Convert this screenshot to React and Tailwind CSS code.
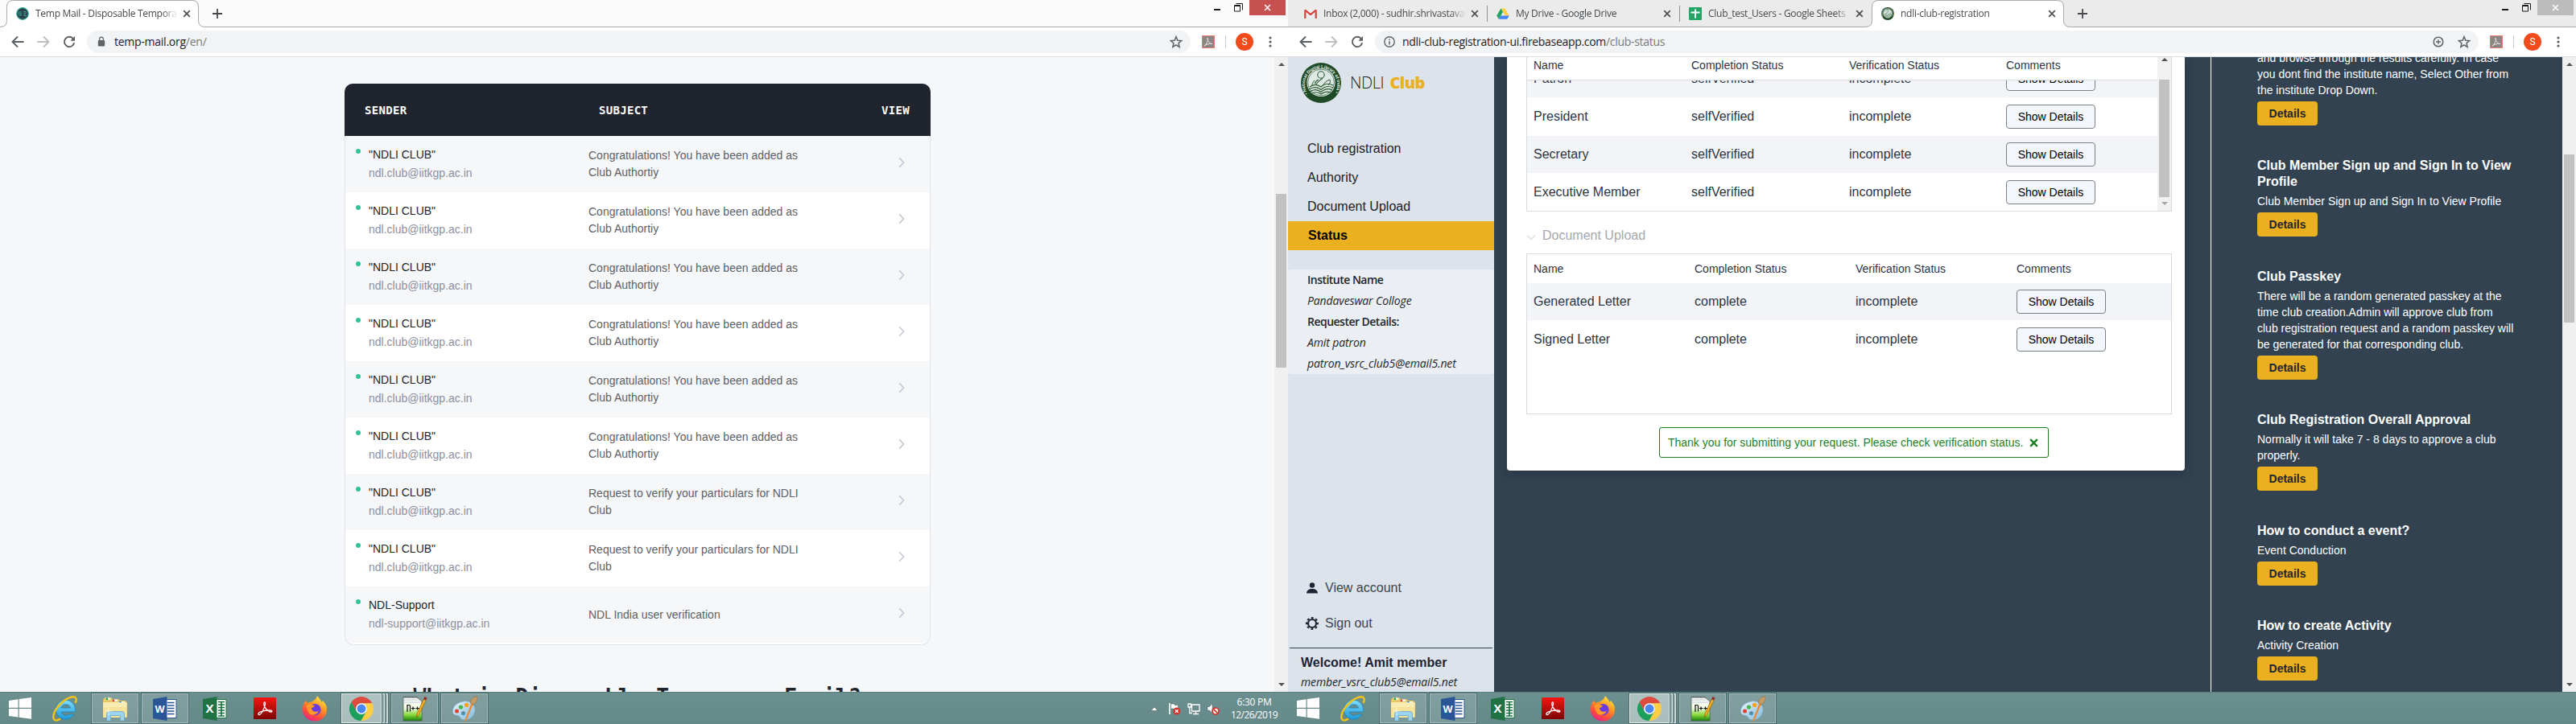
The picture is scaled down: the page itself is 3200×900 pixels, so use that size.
import React from 'react';

const ARIAL = "font-['Liberation_Sans',sans-serif]";
const UI = "font-['Open_Sans',sans-serif]";

/* ---------- small icons ---------- */

function NdliSeal({ id, className }) {
  return (
    <svg viewBox="0 0 50 50" className={className}>
      <circle cx="25" cy="25" r="25" fill="#1f4a26" />
      <circle cx="25" cy="24.5" r="17.6" fill="#dfe9e4" />
      <circle cx="25" cy="24.5" r="16.4" fill="none" stroke="#4a6e50" strokeWidth="0.8" />
      <defs>
        <path id={id} d="M8.6 38.5 A20.2 20.2 0 1 1 41.6 38.5" />
      </defs>
      <text fontSize="5.4" fontWeight="bold" fill="#e4efe4" fontFamily="Liberation Sans, sans-serif">
        <textPath href={'#' + id} textLength="86">• National Digital Library of India •</textPath>
      </text>
      <circle cx="25" cy="15" r="4.2" fill="none" stroke="#2a5a34" strokeWidth="1.1" />
      <path d="M27 19 C24 22 21 23 19 27 M22 21 C19 22 18 24 17.5 26" fill="none" stroke="#2a5a34" strokeWidth="1.1" />
      <path
        d="M11 30 C16 26 21 27 25 30 C29 26 34 25 40 28 M10 33 C16 29.500 21 30 25 33.500 C30 29 35 28.500 40 31 M11 36 C16 32.500 21 33 25 36.500 C30 32 35 32 39 34 M14 38 C18 36 21 36 25 39 C29 36 33 35.500 37 37"
        fill="none" stroke="#2a5a34" strokeWidth="1.2"
      />
      <path d="M27 29 C29 25 32 22 36 21 C37 24 36 26 34 28 M14 28 C14 26 16 23 17 22" fill="none" stroke="#2a5a34" strokeWidth="1" />
    </svg>
  );
}

function TempMailIcon() {
  return (
    <svg viewBox="0 0 16 16" className="size-4">
      <circle cx="8" cy="8" r="7.300" fill="#2b3f4e" stroke="#35b093" strokeWidth="1.2" />
      <path d="M2.500 6H7M2 8H7M3 10H7M9 5.500H12V8H10V10.500H13" stroke="#35b093" strokeWidth="0.9" fill="none" />
    </svg>
  );
}

function GmailIcon() {
  return (
    <svg viewBox="0 0 16 16" className="size-4">
      <path d="M2 3H14V14H2Z" fill="#eceff1" />
      <path d="M1.300 14V3.500L8 9.200L14.700 3.500V14" fill="none" stroke="#d5443a" strokeWidth="2.200" strokeLinejoin="bevel" />
    </svg>
  );
}

function DriveIcon() {
  return (
    <svg viewBox="0 0 16 16" className="size-4">
      <path d="M5.500 1.500H10.500L15.800 10.500H10.800Z" fill="#ffcf48" />
      <path d="M5.500 1.500L0.200 10.500L2.800 14.700L8 5.800Z" fill="#1fa463" />
      <path d="M5.200 10.500H15.800L13.200 14.700H2.800Z" fill="#4285f4" />
    </svg>
  );
}

function SheetsIcon() {
  return (
    <svg viewBox="0 0 16 16" className="size-4">
      <rect width="16" height="16" rx="1.200" fill="#23a566" />
      <path d="M8 2.500V13.500M2.500 6.500H13.500" stroke="#fff" strokeWidth="2" />
    </svg>
  );
}

function Cross({ className }) {
  return (
    <svg viewBox="0 0 10 10" className={className}>
      <path d="M1.200 1.200L8.800 8.800M8.800 1.200L1.200 8.800" stroke="currentColor" strokeWidth="1.700" />
    </svg>
  );
}

/* ---------- browser chrome ---------- */

function Tab({ icon, title, active, divider }) {
  return (
    <div className={'relative flex h-[34px] w-[239px] shrink-0 items-center pl-3 ' + (active ? '' : 'border-b border-[#a9a9a9]')}>
      {active && (
        <svg viewBox="0 0 255 34" className="absolute -left-2 top-0 h-[34px] w-[255px]">
          <path d="M0 34V33.500Q8.500 33.500 8.500 25.500V8.500Q8.500 .5 16.500 .5H238.500Q246.500 .5 246.500 8.500V25.500Q246.500 33.500 255 33.500V34Z" fill="#fff" />
          <path d="M0 33.500Q8.500 33.500 8.500 25.500V8.500Q8.500 .5 16.500 .5H238.500Q246.500 .5 246.500 8.500V25.500Q246.500 33.500 255 33.500" fill="none" stroke="#a9a9a9" />
        </svg>
      )}
      <div className="relative flex w-full items-center">
        {icon}
        <div className="ml-2 w-[177px] overflow-hidden whitespace-nowrap text-xs leading-4 tracking-[-0.27px] text-[#45494d] [mask-image:linear-gradient(to_right,#000_158px,transparent_177px)]">
          {title}
        </div>
        <Cross className="ml-[6px] size-[10px] text-[#4b4f53]" />
      </div>
      {divider && <div className="absolute -right-px top-[7px] h-5 w-px bg-[#8f8f8f]" />}
    </div>
  );
}

function TabStrip({ tabs, focused }) {
  return (
    <div className={'flex h-[34px] ' + (focused ? 'bg-[#fbfbfb]' : 'bg-[#ebebeb]')}>
      <div className="w-2 border-b border-[#a9a9a9]" />
      {tabs}
      <div className="flex flex-1 items-start justify-end border-b border-[#a9a9a9]">
        <svg viewBox="0 0 12 12" className="ml-[17px] mr-auto mt-[11px] size-3">
          <path d="M6 0V12M0 6H12" stroke="#45494d" strokeWidth="1.800" />
        </svg>
        <div className="mt-[11px] h-[2px] w-2 bg-[#1b1b1b]" />
        <svg viewBox="0 0 11 11" className="ml-[17px] mt-1 size-[11px]">
          <path d="M2.500 .5H10.500V8.500" fill="none" stroke="#1b1b1b" />
          <path d="M.5 2.500H7.500V10H.5ZM.5 3.500H7.500" fill="none" stroke="#1b1b1b" />
        </svg>
        <div className={'ml-[8px] mr-[3px] flex h-[19px] w-[45px] items-center justify-center text-white ' + (focused ? 'bg-[#c75050]' : 'bg-[#bcbcbc]')}>
          <Cross className="size-[9px]" />
        </div>
      </div>
    </div>
  );
}

function Toolbar({ secure, host, path, zoomed }) {
  return (
    <div className="flex h-[37px] items-center border-b border-[#d9dadc] bg-white pb-px pl-[14px] text-[#5a5d61]">
      <svg viewBox="0 0 16 16" className="size-4"><path d="M15.500 8H1.500M8 1.500L1.500 8L8 14.500" fill="none" stroke="currentColor" strokeWidth="1.900" /></svg>
      <svg viewBox="0 0 16 16" className="ml-4 size-4 text-[#bcbec0]"><path d="M.5 8H14.500M8 1.500L14.500 8L8 14.500" fill="none" stroke="currentColor" strokeWidth="1.900" /></svg>
      <svg viewBox="0 0 16 16" className="ml-4 size-4">
        <path d="M13 4.100A6.200 6.200 0 1 0 14.200 9.200" fill="none" stroke="currentColor" strokeWidth="1.900" />
        <path d="M15 1V6.700H9.300Z" fill="currentColor" />
      </svg>
      <div className="ml-[14px] flex h-7 w-[1371px] items-center rounded-full bg-[#f1f3f4] pl-[11px] pr-[10px]">
        {secure ? (
          <svg viewBox="0 0 14 14" className="size-[14px]">
            <rect x="2.800" y="5" width="8.400" height="7.500" rx="1" fill="#5f6368" />
            <path d="M4.700 5.500V3.500A2.300 2.300 0 0 1 9.300 3.500V5.500" fill="none" stroke="#5f6368" strokeWidth="1.200" />
          </svg>
        ) : (
          <svg viewBox="0 0 14 14" className="size-[14px]">
            <circle cx="7" cy="7" r="6.200" fill="none" stroke="#5f6368" strokeWidth="1.400" />
            <path d="M7 6.200V10.500M7 3.400V5" stroke="#5f6368" strokeWidth="1.500" />
          </svg>
        )}
        <div className={'mt-px flex-1 text-sm leading-5 text-[#202124] ' + (secure ? 'ml-[9px] tracking-[-0.255px]' : 'ml-[9px] tracking-[-0.31px]')}>
          {host}<span className="text-[#777a7e]">{path}</span>
        </div>
        {zoomed && (
          <svg viewBox="0 0 14 14" className="mr-[17px] size-[14px]">
            <circle cx="7" cy="7" r="5.800" fill="none" stroke="#5f6368" strokeWidth="1.500" />
            <path d="M7 4V10M4 7H10" stroke="#5f6368" strokeWidth="1.300" />
          </svg>
        )}
        <svg viewBox="0 0 24 24" className="size-4">
          <path d="M12 2.500L14.800 9.300L22 9.900L16.500 14.600L18.200 21.700L12 17.900L5.800 21.700L7.500 14.600L2 9.900L9.200 9.300Z" fill="none" stroke="#5f6368" strokeWidth="2.300" />
        </svg>
      </div>
      <svg viewBox="0 0 16 16" className="ml-[14px] size-4">
        <rect x=".5" y=".5" width="15" height="15" fill="#8b8484" stroke="#ea7a74" />
        <path d="M3 13C6 11 8.300 6 7.300 3.200C6.300 6 9.500 10.500 13 10.500C9.500 9.800 6 11 3 13Z" fill="none" stroke="#e9e6e6" />
      </svg>
      <div className="ml-[13px] h-4 w-px bg-[#cfd1d3]" />
      <div className="ml-[12px] flex size-[22px] items-center justify-center rounded-full bg-[#f04a1d] font-['Roboto',sans-serif] text-xs text-white">S</div>
      <svg viewBox="0 0 4 14" className="ml-[19px] h-[14px] w-1"><g fill="#5a5d61"><circle cx="2" cy="2" r="1.600" /><circle cx="2" cy="7" r="1.600" /><circle cx="2" cy="12" r="1.600" /></g></svg>
    </div>
  );
}

function Arrow({ down, className }) {
  return (
    <svg viewBox="0 0 8 4" className={'h-1 w-2 ' + className}>
      <path d={down ? 'M0 0H8L4 4Z' : 'M0 4H8L4 0Z'} fill="currentColor" />
    </svg>
  );
}

function PageScrollbar({ thumb }) {
  return (
    <div className="flex w-[17px] flex-col items-center bg-[#f0f0f0] text-[#505050]">
      <Arrow className="mt-[7px]" />
      <div className={'w-[13px] bg-[#c1c1c1] ' + thumb} />
      <Arrow down className="mb-[7px] mt-auto" />
    </div>
  );
}

/* ---------- taskbar ---------- */

function StartIcon() {
  return (
    <svg viewBox="0 0 28 27" className="h-[27px] w-7">
      <path d="M0 4L11.500 2.300V12.700H0ZM12.700 2.100L28 0V12.700H12.700ZM0 14H11.500V24.500L0 22.900ZM12.700 14H28V26.700L12.700 24.700Z" fill="#fff" />
    </svg>
  );
}

function ExplorerEdgeIcon() {
  return (
    <svg viewBox="0 0 32 32" className="size-8">
      <defs>
        <linearGradient id="ieBlue" x1="0" y1="0" x2="0" y2="1"><stop offset="0" stopColor="#7fdcfb" /><stop offset="1" stopColor="#1c9ad9" /></linearGradient>
      </defs>
      <path d="M28.500 17.500A12 12 0 1 0 27 23H20.500A6 6 0 0 1 11 20H28.500ZM11 15A6 6 0 0 1 22.500 15Z" fill="url(#ieBlue)" stroke="#1683bd" strokeWidth=".7" />
      <path d="M10 28.500C5 32 .5 31 1.500 24.500C3 15 15 3.500 24 1.500C29.500 .5 31 4 28.500 9" fill="none" stroke="#f3c317" strokeWidth="2.400" />
    </svg>
  );
}

function FoldersIcon() {
  return (
    <svg viewBox="0 0 32 32" className="size-8">
      <path d="M1 5L3 2H11L13 4H20L22 6H29L31 9V26H1Z" fill="#e9c867" />
      <path d="M4 2.500H10V5H4Z" fill="#f4f4ee" /><path d="M4.500 2.500H7V5H4.500Z" fill="#23a455" />
      <path d="M12 4.500H19V7H12Z" fill="#f4f4ee" /><path d="M12.500 4.500H15V7H12.500Z" fill="#d9452c" />
      <path d="M20 7H28V9H20Z" fill="#f4f4ee" /><path d="M20.500 7H24V9H20.500Z" fill="#2b8be0" />
      <path d="M1 8H30.500V27H1Z" fill="#f6e39b" />
      <path d="M1 8H30.500V14H1Z" fill="#f9ebb2" />
      <path d="M5.500 31V22.500Q5.500 19.500 8.500 19.500H24.500Q27.500 19.500 27.500 22.500V31H22.500V24.500H10.500V31Z" fill="#9ed3ef" stroke="#5fa9d0" strokeWidth=".8" />
      <path d="M8 14V24M3.500 19H13" stroke="#fff" strokeWidth=".8" opacity=".8" />
    </svg>
  );
}

function OfficeIcon({ letter, dark, sheet }) {
  return (
    <svg viewBox="0 0 32 32" className="size-8">
      <path d="M15 4.500H30V27.500H15Z" fill="#fff" stroke={dark} />
      {sheet
        ? <path d="M20 7.500H28M20 11H28M20 14.500H28M20 18H28M20 21.500H28M20 25H28M24 7V25.500" stroke={dark} strokeWidth="1.700" />
        : <path d="M19 8.500H27.500M19 12H27.500M19 15.500H27.500M19 19H27.500M19 22.500H27.500" stroke={dark} strokeWidth="1.500" />}
      <path d="M1 4L18.500 1V31L1 28Z" fill={dark} />
      <text x="9.500" y="21" textAnchor="middle" fontSize={sheet ? 15 : 12.5} fontWeight="bold" fill="#fff" fontFamily="Open Sans, sans-serif">{letter}</text>
    </svg>
  );
}

function AcrobatIcon() {
  return (
    <svg viewBox="0 0 28 27" className="h-[27px] w-7">
      <defs><linearGradient id="acro" x1="0" y1="0" x2="0" y2="1"><stop offset="0" stopColor="#fb1410" /><stop offset="1" stopColor="#7a0503" /></linearGradient></defs>
      <rect width="28" height="27" rx="1" fill="url(#acro)" />
      <path d="M6 20.500C5.500 18 13 16 20 16C24 16 23.500 18.500 21 18C16.500 17 12.500 11 12.800 7.500C13 5 15 5.500 14.600 8C14 12.500 9.500 21.500 7 21.500Q6.200 21.500 6 20.500Z" fill="none" stroke="#fff" strokeWidth="1.300" />
    </svg>
  );
}

function FirefoxIcon() {
  return (
    <svg viewBox="0 0 32 32" className="size-8">
      <defs>
        <linearGradient id="fox" x1=".8" y1="0" x2=".3" y2="1"><stop offset="0" stopColor="#fff14f" /><stop offset=".4" stopColor="#ff9a1f" /><stop offset=".75" stopColor="#ff4a3e" /><stop offset="1" stopColor="#e5238a" /></linearGradient>
      </defs>
      <path d="M3 8L5 6L7 9Q9 7.500 12 7.500C15 6 18 4 19 0C21 2.500 23.500 5 24.500 8L26 6C29.500 9.500 31 13 31 17A15 14.500 0 0 1 1 17C1 13 2 11 3 8Z" fill="url(#fox)" />
      <circle cx="16.500" cy="17" r="7" fill="#6a3be0" />
      <path d="M6 11C10 9.500 12 11.500 16 12C16 14 12.500 14 12 16C13 20 18 21 21 18.500C19 24 12 25.500 8.500 21C6.500 18 6 14 6 11Z" fill="#ff9a26" />
    </svg>
  );
}

function ChromeIcon() {
  return (
    <svg viewBox="0 0 48 48" className="size-[30px]">
      <path d="M3.800 11.030A24 24 0 0 1 45.300 13L24 13A11 11 0 0 0 14.470 29.500Z" fill="#dd4b3e" />
      <path d="M45.300 13A24 24 0 0 1 22.870 47.970L33.530 29.500A11 11 0 0 0 24 13Z" fill="#fdce43" />
      <path d="M22.870 47.970A24 24 0 0 1 3.800 11.030L14.470 29.500A11 11 0 0 0 33.530 29.500Z" fill="#1d9f5c" />
      <circle cx="24" cy="24" r="11" fill="#f4f6f8" />
      <circle cx="24" cy="24" r="8.700" fill="#4a87ee" />
    </svg>
  );
}

function NotepadIcon() {
  return (
    <svg viewBox="0 0 32 32" className="size-8">
      <defs><linearGradient id="npp" x1="0" y1="0" x2="0" y2="1"><stop offset="0" stopColor="#fff" /><stop offset=".45" stopColor="#f2fbe6" /><stop offset=".75" stopColor="#86d83a" /><stop offset="1" stopColor="#13800b" /></linearGradient></defs>
      <path d="M2 2H19L25 7V31H2Z" fill="url(#npp)" stroke="#4f5f4f" strokeWidth=".8" />
      <path d="M2 5H20M2 8H23" stroke="#b9c6d2" strokeWidth="1" />
      <path d="M2 1.500H20" stroke="#555" strokeWidth="1.600" strokeDasharray="1 1.200" />
      <path d="M7 20V11.500H9.500Q10.500 11.500 10.500 13V19.500M12 15.500H16.500M14 13.500V17.500M17.500 15.500H22M19.500 13.500V17.500" fill="none" stroke="#111" strokeWidth="1.200" />
      <path d="M18 27L19 22L27.500 3.500L30.500 5L21.500 23.500Z" fill="#f2b01e" stroke="#8a5b10" strokeWidth=".7" />
      <path d="M27 4.500L28.500 1L31.500 2.500L30 5.500Z" fill="#8e2a2a" />
    </svg>
  );
}

function PaintIcon() {
  return (
    <svg viewBox="0 0 32 32" className="size-8">
      <defs><linearGradient id="pal" x1="0" y1="0" x2="1" y2="1"><stop offset="0" stopColor="#e8f5fc" /><stop offset="1" stopColor="#7fb9dc" /></linearGradient></defs>
      <path d="M14 7C22 5 30 11 29 19C28 26 22 30.500 15 30C10 29.500 11 25 7.500 24.500C3 24 .5 22 1.500 17C3 11.500 8 8 14 7Z" fill="url(#pal)" stroke="#76a7c4" strokeWidth=".7" />
      <circle cx="6.500" cy="19" r="2.500" fill="#e2412f" /><circle cx="11.500" cy="14" r="2.600" fill="#46b648" /><circle cx="18.500" cy="11.500" r="2.800" fill="#f3a72b" />
      <circle cx="14.500" cy="21.500" r="2.600" fill="#5b8ea8" />
      <path d="M16 31.500L24.500 9L27 10L18 31.500Z" fill="#ea8a34" />
      <path d="M23.500 9C23 5 26 1.500 31 .5C33.500 4 31 8 27.500 10.500Z" fill="#c69a67" stroke="#8a6a45" strokeWidth=".6" />
    </svg>
  );
}

const openWindow = 'border border-[#a3b8b7] bg-white/15 outline outline-[#4d6e6d]';

function Taskbar({ tray }) {
  return (
    <div className="flex h-10 items-center border-t border-[#55807f] bg-linear-to-b from-[#6c8f8f] to-[#658888]">
      <div className="ml-[11px]"><StartIcon /></div>
      <div className="ml-[26px]"><ExplorerEdgeIcon /></div>
      <div className={'ml-[17px] flex h-[37px] w-[58px] items-center justify-center ' + openWindow}><FoldersIcon /></div>
      <div className={'ml-[4px] flex h-[37px] w-[58px] items-center justify-center ' + openWindow}><OfficeIcon letter="W" dark="#2a5699" /></div>
      <div className="ml-[17px]"><OfficeIcon letter="X" dark="#207245" sheet /></div>
      <div className="ml-[32px]"><AcrobatIcon /></div>
      <div className="ml-[32px]"><FirefoxIcon /></div>
      <div className="ml-[17px] flex h-[37px] w-[50px] items-center justify-center border border-[#dfe7e7] bg-white/45 outline outline-[#4d6e6d]"><ChromeIcon /></div>
      <div className="ml-px h-[37px] w-[3px] border border-l-0 border-[#dfe7e7] bg-white/30 outline outline-[#4d6e6d]" />
      <div className="ml-px h-[37px] w-[3px] border border-l-0 border-[#dfe7e7] bg-white/30 outline outline-[#4d6e6d]" />
      <div className={'ml-[4px] flex h-[37px] w-[58px] items-center justify-center ' + openWindow}><NotepadIcon /></div>
      <div className={'ml-[4px] flex h-[37px] w-[58px] items-center justify-center ' + openWindow}><PaintIcon /></div>
      {tray && (
        <div className="ml-auto flex items-center">
          <svg viewBox="0 0 10 6" className="h-[6px] w-[10px]"><path d="M1 5.500H9L5 .8Z" fill="#fff" stroke="#4d5f5f" strokeWidth=".6" /></svg>
          <svg viewBox="0 0 16 16" className="ml-[12px] size-4">
            <path d="M2 1V15" stroke="#fff" strokeWidth="1.600" />
            <path d="M3.500 2H7.500L8.500 3.500H12.500V9.500H8L7 8H3.500Z" fill="#fff" stroke="#45605f" strokeWidth=".5" />
            <circle cx="10.800" cy="11" r="4.500" fill="#d8322c" /><path d="M9 9.200L12.600 12.800M12.600 9.200L9 12.800" stroke="#fff" strokeWidth="1.300" />
          </svg>
          <svg viewBox="0 0 16 16" className="ml-[8px] size-4">
            <path d="M5.500 3H15V11H5.500ZM7 14.500H14M10.500 11V14.500M1 2H4.500V6H1ZM2.800 6V13.500H6" fill="none" stroke="#fff" strokeWidth="1.300" />
          </svg>
          <svg viewBox="0 0 16 16" className="ml-[8px] size-4">
            <path d="M1 5.500H3.500L7 1.500V13.500L3.500 10H1Z" fill="#fff" stroke="#45605f" strokeWidth=".5" />
            <circle cx="11" cy="11" r="4" fill="#fff" stroke="#d8322c" strokeWidth="1.700" /><path d="M8.400 8.400L13.600 13.600" stroke="#d8322c" strokeWidth="1.700" />
          </svg>
          <div className="ml-[13px] mr-[12px] w-[60px] text-center text-xs leading-4 tracking-[-0.57px] text-white">
            <div className="tracking-[-0.3px]">6:30 PM</div>
            <div>12/26/2019</div>
          </div>
        </div>
      )}
    </div>
  );
}

/* ---------- left window: inbox ---------- */

const added = ['Congratulations! You have been added as', 'Club Authortiy'];
const verify = ['Request to verify your particulars for NDLI', 'Club'];
const club = { name: '"NDLI CLUB"', email: 'ndl.club@iitkgp.ac.in' };
const mails = [
  { ...club, subject: added }, { ...club, subject: added }, { ...club, subject: added },
  { ...club, subject: added }, { ...club, subject: added }, { ...club, subject: added },
  { ...club, subject: verify }, { ...club, subject: verify },
  { name: 'NDL-Support', email: 'ndl-support@iitkgp.ac.in', subject: ['NDL India user verification'] },
];

function InboxWindow() {
  return (
    <div className={'flex h-[900px] w-[1600px] flex-col ' + UI}>
      <TabStrip focused tabs={<Tab active icon={<TempMailIcon />} title="Temp Mail - Disposable Temporary" />} />
      <Toolbar secure host="temp-mail.org" path="/en/" />
      <div className="flex h-[789px] overflow-hidden bg-[#f6f7f9]">
        <div className="flex w-[1583px] flex-col pt-[33px]">
          <div className={'ml-[428px] w-[728px] shrink-0 ' + ARIAL}>
            <div className="flex h-[65px] items-center rounded-t-[10px] bg-[#20242d] pl-[25px] pt-px font-['DejaVu_Sans_Mono',monospace] text-sm font-bold tracking-[0.3px] text-white">
              <div className="w-[291px]">SENDER</div>
              <div className="w-[351px]">SUBJECT</div>
              <div>VIEW</div>
            </div>
            <div className="h-[633px] overflow-hidden rounded-b-xl border border-t-0 border-[#e0e2ea] bg-white">
              {mails.map((m, i) => (
                <div key={i} className={'flex h-[70px] text-sm last:rounded-b-lg ' + (i % 2 ? 'bg-white' : 'bg-[#f5f7f9]')}>
                  <div className="ml-[13px] mt-4 size-[6px] rounded-full bg-[#2fc39a]" />
                  <div className="ml-[10px] w-[273px] pt-3 leading-[23px]">
                    <div className="text-[#20242d]">{m.name}</div>
                    <div className="text-[#8c8fa0]">{m.email}</div>
                  </div>
                  <div className="flex w-[385px] flex-col justify-center leading-[21px] text-[#5c6067]">
                    {m.subject.map((s) => <div key={s}>{s}</div>)}
                  </div>
                  <svg viewBox="0 0 8 14" className="mt-[26px] h-[14px] w-2">
                    <path d="M1.200 1.200L6.500 7L1.200 12.800" fill="none" stroke="#c6c8d4" strokeWidth="1.700" />
                  </svg>
                </div>
              ))}
            </div>
          </div>
          <div className="mt-12 shrink-0 text-center font-['DejaVu_Sans_Mono',monospace] text-[26.400px] font-bold leading-8 text-[#20242d]">
            What is Disposable Temporary Email?
          </div>
        </div>
        <PageScrollbar thumb="mt-[159px] h-[216px]" />
      </div>
      <Taskbar tray />
    </div>
  );
}

/* ---------- right window: club status ---------- */

function Sidebar() {
  return (
    <div className="flex w-64 flex-col bg-[#dce3ea]">
      <div className="ml-4 mt-[7px] flex h-[50px] items-center">
        <NdliSeal id="sealRing" className="size-[50px]" />
        <div className="ml-[11px] pb-px text-xl leading-[26px] text-[#20242d]">
          <span className="font-light tracking-[-0.4px]">NDLI</span>{' '}
          <span className="ml-[2px] font-extrabold tracking-[-0.6px] text-[#ebb020]">Club</span>
        </div>
      </div>
      <div className={'mt-[39px] text-base leading-9 text-[#1b2027] ' + ARIAL}>
        <div className="pl-6">Club registration</div>
        <div className="pl-6">Authority</div>
        <div className="pl-6">Document Upload</div>
        <div className="bg-[#ebb020] pl-[25px] font-bold text-black">Status</div>
      </div>
      <div className="mt-6 h-[130px] rounded bg-[#ebeff3] pl-6 text-sm leading-[26px] text-[#20252b]">
        <div className="font-semibold tracking-[-0.52px]">Institute Name</div>
        <div className="italic tracking-[-0.12px]">Pandaveswar Colloge</div>
        <div className="font-semibold tracking-[-0.52px]">Requester Details:</div>
        <div className="italic tracking-[-0.12px]">Amit patron</div>
        <div className="italic tracking-[-0.12px]">patron_vsrc_club5@email5.net</div>
      </div>
      <div className={'mt-auto flex flex-col gap-5 pl-[22px] text-base leading-6 text-[#3a4350] ' + ARIAL}>
        <div className="flex items-center">
          <svg viewBox="0 0 16 16" className="size-4"><circle cx="8" cy="4.500" r="3.200" fill="#1d2433" /><path d="M1 14.500C1 11 4 9 8 9S15 11 15 14.500Z" fill="#1d2433" /></svg>
          <span className="ml-2">View account</span>
        </div>
        <div className="flex items-center">
          <svg viewBox="0 0 16 16" className="size-4">
            <circle cx="8" cy="8" r="5" fill="none" stroke="#1d2433" strokeWidth="2.200" />
            <circle cx="8" cy="8" r="6.900" fill="none" stroke="#1d2433" strokeWidth="2.200" strokeDasharray="2.700 2.720" strokeDashoffset="1.350" />
          </svg>
          <span className="ml-2">Sign out</span>
        </div>
      </div>
      <div className="mx-[2px] mt-[18px] h-[55px] border-t border-[#2f4452] pl-[14px] pt-[6px] leading-6">
        <div className={'text-base font-bold leading-6 text-[#1d2433] ' + ARIAL}>Welcome! Amit member</div>
        <div className="text-sm italic leading-6 tracking-[-0.14px] text-[#20252b]">member_vsrc_club5@email5.net</div>
      </div>
    </div>
  );
}

function ShowDetails() {
  return (
    <button className="flex h-[30px] w-[111px] items-center justify-center rounded border border-[#7b7f86] bg-[#f3f6fb] text-sm text-black">
      Show Details
    </button>
  );
}

function Row({ cells, cols, gray }) {
  return (
    <div className={'grid h-[47px] shrink-0 items-center border-b border-white pl-2 text-base ' + cols + (gray ? ' bg-[#f3f4f7]' : ' bg-white')}>
      {cells.map((c, i) => <div key={i}>{c}</div>)}
      <div><ShowDetails /></div>
    </div>
  );
}

const narrow = 'grid-cols-[196px_196px_195px_180px]';
const wide = 'grid-cols-[200px_200px_200px_180px]';

function StatusCard() {
  return (
    <div className={'ml-4 h-[514px] w-[842px] rounded-b bg-white px-6 text-[#2b3444] shadow-[0_4px_12px_rgba(20,35,50,0.35)] ' + ARIAL}>
      <div className="flex h-48 w-[802px] border border-t-0 border-[#d7dae0]">
        <div className="flex w-[783px] shrink-0 flex-col">
          <div className={'grid h-[29px] shrink-0 items-center border-b border-[#d7dae0] pb-[8px] pl-2 text-sm ' + narrow}>
            <div>Name</div><div>Completion Status</div><div>Verification Status</div><div>Comments</div>
          </div>
          <div className="flex flex-1 flex-col overflow-hidden">
            <div className="-mt-[25px]">
              <Row cols={narrow} gray cells={['Patron', 'selfVerified', 'incomplete']} />
              <Row cols={narrow} cells={['President', 'selfVerified', 'incomplete']} />
              <Row cols={narrow} gray cells={['Secretary', 'selfVerified', 'incomplete']} />
              <Row cols={narrow} cells={['Executive Member', 'selfVerified', 'incomplete']} />
            </div>
          </div>
        </div>
        <div className="flex w-[17px] flex-col items-center bg-[#f1f1f1]">
          <Arrow className="mt-px text-[#505050]" />
          <div className="mt-[23px] h-[146px] w-[13px] bg-[#c1c1c1]" />
          <Arrow down className="mb-[7px] mt-auto text-[#a3a3a3]" />
        </div>
      </div>
      <div className="mt-[18px] flex h-6 items-center text-base text-[#a3a9b0]">
        <svg viewBox="0 0 12 8" className="mt-1 h-2 w-3"><path d="M1 1.500L6 6.500L11 1.500" fill="none" stroke="#e3e8ee" strokeWidth="2" /></svg>
        <span className="ml-2">Document Upload</span>
      </div>
      <div className="mt-[10px] h-[200px] w-[802px] border border-[#d7dae0]">
        <div className={'grid h-9 items-center pb-px pl-2 text-sm ' + wide}>
          <div>Name</div><div>Completion Status</div><div>Verification Status</div><div>Comments</div>
        </div>
        <Row cols={wide} gray cells={['Generated Letter', 'complete', 'incomplete']} />
        <Row cols={wide} cells={['Signed Letter', 'complete', 'incomplete']} />
      </div>
      <div className="ml-[165px] mt-4 flex h-[38px] w-[484px] items-center rounded-[3px] border border-[#1f7f1f] pl-[10px] text-sm text-[#1f7f1f]">
        <span className="whitespace-nowrap tracking-[-0.01px]">Thank you for submitting your request. Please check verification status.</span>
        <svg viewBox="0 0 11 11" className="ml-[8px] size-[11px] shrink-0"><path d="M1.200 1.200L9.800 9.800M9.800 1.200L1.200 9.800" stroke="#1f7f1f" strokeWidth="2.500" /></svg>
      </div>
    </div>
  );
}

const helpTopics = [
  { title: [], body: ['and browse through the results carefully. In case', 'you dont find the institute name, Select Other from', 'the institute Drop Down.'] },
  { title: ['Club Member Sign up and Sign In to View', 'Profile'], body: ['Club Member Sign up and Sign In to View Profile'] },
  { title: ['Club Passkey'], body: ['There will be a random generated passkey at the', 'time club creation.Admin will approve club from', 'club registration request and a random passkey will', 'be generated for that corresponding club.'] },
  { title: ['Club Registration Overall Approval'], body: ['Normally it will take 7 - 8 days to approve a club', 'properly.'] },
  { title: ['How to conduct a event?'], body: ['Event Conduction'] },
  { title: ['How to create Activity'], body: ['Activity Creation'] },
];

function HelpColumn() {
  return (
    <div className={'ml-8 h-[789px] w-[437px] overflow-hidden whitespace-nowrap border-l border-white pl-[57px] leading-5 text-white ' + ARIAL}>
      <div className="-mt-[13px]">
        {helpTopics.map((t, i) => (
          <div key={i} className="mb-10">
            {t.title.map((l) => <div key={l} className="text-base font-bold leading-5">{l}</div>)}
            <div className="pb-1 pt-1 text-sm leading-5">{t.body.map((l) => <div key={l}>{l}</div>)}</div>
            <button className="flex h-[30px] w-[75px] items-center justify-center rounded bg-[#ebb020] text-sm font-bold text-[#1d2733]">Details</button>
          </div>
        ))}
      </div>
    </div>
  );
}

function ClubWindow() {
  return (
    <div className={'flex h-[900px] w-[1600px] flex-col ' + UI}>
      <TabStrip
        tabs={
          <>
            <Tab divider icon={<GmailIcon />} title="Inbox (2,000) - sudhir.shrivastava@gmail.com" />
            <Tab divider icon={<DriveIcon />} title="My Drive - Google Drive" />
            <Tab icon={<SheetsIcon />} title="Club_test_Users - Google Sheets" />
            <Tab active icon={<NdliSeal id="tabRing" className="size-4" />} title="ndli-club-registration" />
          </>
        }
      />
      <Toolbar zoomed host="ndli-club-registration-ui.firebaseapp.com" path="/club-status" />
      <div className="flex h-[789px] overflow-hidden bg-[#324250]">
        <Sidebar />
        <StatusCard />
        <HelpColumn />
        <PageScrollbar thumb="mt-[110px] h-[209px]" />
      </div>
      <Taskbar />
    </div>
  );
}

export default function App() {
  return (
    <div className="flex h-[900px] w-[3200px] overflow-hidden">
      <InboxWindow />
      <ClubWindow />
    </div>
  );
}
